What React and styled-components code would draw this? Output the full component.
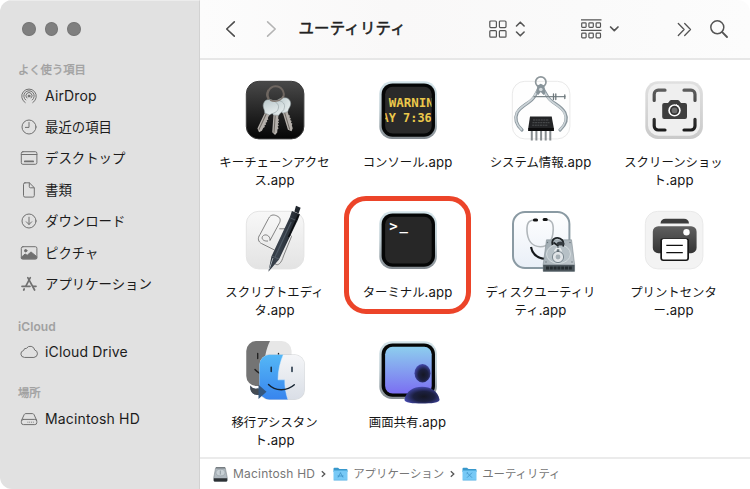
import React from 'react';
import styled, { createGlobalStyle } from 'styled-components';

const GlobalStyle = createGlobalStyle`
  * {
    box-sizing: border-box;
  }

  body {
    margin: 0;
    background: #fff;
    font-family: Inter, 'Noto Sans CJK JP', sans-serif;
    overflow: hidden;
  }

  p {
    margin: 0;
  }

  svg {
    display: block;
    flex-shrink: 0;
    overflow: visible;
  }
`

const Window = styled.div`
  display: flex;
  width: 750px;
  height: 489px;
  overflow: hidden;
  border-radius: 12px;
  background: #fff;
`

const Sidebar = styled.div`
  width: 200px;
  flex-shrink: 0;
  padding: 22px 0 0 18px;
  background: #e1e1e1;
  border-top: 1px solid #ececec;
  border-right: 1px solid #d2d2d2;
`

const Lights = styled.div`
  display: flex;
  gap: 9px;
  padding-left: 4px;
  margin-top: -1px;
  margin-bottom: 25px;
`

const Light = styled.span`
  width: 13.5px;
  height: 14px;
  border-radius: 50%;
  background: #7f7f7f;
  border: 1px solid #757575;
`

const Section = styled.div`
  margin-bottom: ${({ gap }) => gap || 0}px;
`

const SectionTitle = styled.p`
  height: 18px;
  margin-bottom: 1px;
  line-height: 18px;
  font-size: ${({ latin }) => latin ? '12px' : '11.3px'};
  font-weight: ${({ latin }) => latin ? 600 : 400};
  letter-spacing: ${({ latin }) => latin ? '0.1px' : '0'};
  -webkit-text-stroke: ${({ latin }) => latin ? '0' : '0.35px #a0a0a0'};
  color: #a0a0a0;
`

const SideItem = styled.div`
  display: flex;
  align-items: center;
  gap: 7px;
  height: 31.4px;
  padding-left: 2px;
  color: #707070;

  & > p {
    font-size: ${({ latin }) => latin ? '14px' : '13.4px'};
    line-height: 20px;
    letter-spacing: ${({ latin }) => latin ? '0.15px' : '0'};
    color: #1c1c1c;
    white-space: nowrap;
  }
`

const Main = styled.div`
  flex: 1;
  min-width: 0;
  display: flex;
  flex-direction: column;
`

const Toolbar = styled.div`
  height: 60px;
  flex-shrink: 0;
  display: flex;
  align-items: center;
  padding: 0 22px 1px 25px;
  background: linear-gradient(90deg, #fcfcfc, #f9f8f8 35%, #fafafa 70%, #fcfcfc);
  border-bottom: 2px solid #e7e7e7;
  color: #555;
`

const Nav = styled.div`
  display: flex;
  gap: 31px;
`

const Title = styled.p`
  margin-left: 22.5px;
  padding-top: 1px;
  font-size: 15.4px;
  line-height: 22px;
  letter-spacing: 0.2px;
  color: #222;
  -webkit-text-stroke: 0.5px #222;
  white-space: nowrap;
`

const Tools = styled.div`
  margin-left: auto;
  display: flex;
  align-items: center;
`

const Tool = styled.div`
  display: flex;
  align-items: center;
  gap: ${({ gap }) => gap || 0}px;
  margin-right: ${({ after }) => after || 0}px;
`

const Files = styled.div`
  flex: 1;
  min-height: 0;
  display: grid;
  grid-template-columns: repeat(4, 133px);
  grid-auto-rows: 130px;
  padding: 14px 0 0 8px;
`

const File = styled.div`
  position: relative;
  display: flex;
  flex-direction: column;
  align-items: center;
`

const FileName = styled.p`
  margin-top: 12px;
  font-size: 12.4px;
  line-height: 18px;
  color: #161616;
  text-align: center;
  white-space: nowrap;

  & > span {
    font-size: 13.2px;
    line-height: 0;
    letter-spacing: 0.1px;
  }
`

const Highlight = styled.div`
  position: absolute;
  top: -8px;
  left: 3px;
  width: 127px;
  height: 118px;
  border: 5px solid #ec4429;
  border-radius: 22px;
`

const PathBar = styled.div`
  height: 32px;
  flex-shrink: 0;
  display: flex;
  align-items: center;
  padding-left: 13px;
  border-top: 2px solid #ebebeb;
  color: #777;
`

const PathItem = styled.div`
  display: flex;
  align-items: center;
  gap: 5px;

  & > p {
    font-size: ${({ latin }) => latin ? '12px' : '11.4px'};
    line-height: 16px;
    letter-spacing: ${({ latin }) => latin ? '0.2px' : '0'};
    white-space: nowrap;
  }
`

const Separator = styled.div`
  padding: 0 7px 0 6px;
`

const SideIcon = ({ children }) => (
  <svg width="18" height="18" viewBox="0 0 18 18" fill="none" stroke="currentColor" strokeWidth="1" strokeLinecap="round" strokeLinejoin="round">
    {children}
  </svg>
)

const sideIcons = {
  airdrop: (
    <SideIcon>
      <path d="M5.2 15.6a7.3 7.3 0 1 1 7.6 0" />
      <path d="M5.7 13a5.2 5.2 0 1 1 6.6 0" />
      <path d="M6.9 11a3.1 3.1 0 1 1 4.2 0" />
      <circle cx="9" cy="9" r="1" fill="currentColor" />
    </SideIcon>
  ),
  recent: (
    <SideIcon>
      <circle cx="9" cy="9" r="7" />
      <path d="M9 4.5V9.4H5.4" />
    </SideIcon>
  ),
  desktop: (
    <SideIcon>
      <rect x="1.3" y="2.7" width="15.6" height="12.6" rx="1.6" />
      <path d="M1.3 5.5H16.9" />
      <path d="M4.8 12.4H13.2" strokeWidth="1.7" />
    </SideIcon>
  ),
  documents: (
    <SideIcon>
      <path d="M5 1.8H9.4L14.3 6.7V14.6a1.5 1.5 0 0 1-1.5 1.5H5a1.5 1.5 0 0 1-1.5-1.5V3.3A1.5 1.5 0 0 1 5 1.8Z" />
      <path d="M9.3 2V5.7a1.1 1.1 0 0 0 1.1 1.1H14" />
    </SideIcon>
  ),
  downloads: (
    <SideIcon>
      <circle cx="9" cy="9" r="7" />
      <path d="M9 5.2V12.4M6.3 9.8 9 12.5 11.7 9.8" />
    </SideIcon>
  ),
  pictures: (
    <SideIcon>
      <rect x="1.3" y="2.7" width="15.6" height="12.4" rx="1.6" />
      <circle cx="5.7" cy="6.7" r="1.2" fill="currentColor" />
      <path d="M1.6 13 5.1 10 7.2 11.3 11 7.9 16.7 12.6V14.6H1.8Z" fill="currentColor" />
    </SideIcon>
  ),
  applications: (
    <SideIcon>
      <path d="M10.3 2.7 6 10.9M7.8 2.7 14.6 15" strokeWidth="1.7" />
      <path d="M2 11.3H10M13 11.3H16" strokeWidth="1.7" />
      <path d="M4.2 14 3.7 15" strokeWidth="1.7" />
    </SideIcon>
  ),
  cloud: (
    <SideIcon>
      <path d="M4.1 14.4a3.5 3.5 0 0 1-.5-6.9A2.6 2.6 0 0 1 6.5 5.3 4.5 4.5 0 0 1 14.7 7a3.8 3.8 0 0 1-.4 7.4Z" />
    </SideIcon>
  ),
  disk: (
    <SideIcon>
      <path d="M1.6 10.2 4.2 4.6Q4.7 3.6 5.8 3.6H12.4Q13.5 3.6 14 4.6L16.6 10.2" />
      <rect x="1.4" y="9.4" width="15.4" height="5.2" rx="2" />
      <path d="M7.5 12.2H14.3" strokeDasharray="0.8 1" strokeLinecap="butt" />
    </SideIcon>
  ),
}

const Tile = ({ fill, stroke }) => (
  <rect x="9.3" y="7.3" width="57.6" height="57.6" rx="12.5" fill={fill} stroke={stroke || 'none'} />
)

const Monitor = ({ id, screen, children }) => (
  <>
    <defs>
      <linearGradient id={`${id}-rim`} x1="0" y1="0" x2="0" y2="1">
        <stop offset="0" stopColor="#d3e4ea" />
        <stop offset=".5" stopColor="#bccbd1" />
        <stop offset="1" stopColor="#858c92" />
      </linearGradient>
    </defs>
    <Tile fill={`url(#${id}-rim)`} />
    <rect x="11.6" y="9.4" width="53.4" height="53.3" rx="11" fill="#050606" />
    <rect x="15.1" y="12.7" width="46.6" height="46.8" rx="7.5" fill={screen} />
    {children}
  </>
)

const AppIcon = ({ children }) => (
  <svg width="76" height="68" viewBox="0 0 76 68">{children}</svg>
)

const KeyShape = ({ x, y, angle, fill }) => (
  <g transform={`translate(${x} ${y}) rotate(${angle})`}>
    <path d="M-2.7 5H2.3V10l1.1 1.2-1.1 1.3 1.1 1.4-1.1 1.4 1.1 1.4-1.1 1.4 1.1 1.4-1.1 1.4V24L.3 26.5-2.7 24Z" fill="#b5b0ab" />
    <path d="M-.9 7V24.4" stroke="#6d6862" strokeWidth="1" />
    <path d="M-7.8-2C-7.8-6.6-4-8 0-8S7.8-6.6 7.8-2C7.8 2.4 4 3.4 2.6 6.6H-2.8C-4 3.4-7.8 2.4-7.8-2Z" fill={fill} stroke="#8c989b" strokeWidth=".5" />
  </g>
)

const appIcons = {
  keychain: (
    <AppIcon>
      <defs>
        <linearGradient id="kc" x1="0" y1="0" x2="0" y2="1">
          <stop offset="0" stopColor="#494949" />
          <stop offset="1" stopColor="#050505" />
        </linearGradient>
        <linearGradient id="kc-key" x1="0" y1="0" x2="1" y2="1">
          <stop offset="0" stopColor="#b6c4c7" />
          <stop offset="1" stopColor="#eef4f4" />
        </linearGradient>
      </defs>
      <Tile fill="url(#kc)" stroke="#3c3c3c" />
      <path d="M32 25A8 8.3 0 1 1 46 24" fill="none" stroke="#6e6660" strokeWidth="2" />
      <KeyShape x={46.5} y={32} angle={-17} fill="url(#kc-key)" />
      <KeyShape x={39.6} y={34.5} angle={4} fill="url(#kc-key)" />
      <KeyShape x={33} y={34} angle={25} fill="url(#kc-key)" />
      <path d="M31.7 25.5A8 8.3 0 0 1 31.5 16" fill="none" stroke="#6f6761" strokeWidth="1.8" />
      <path d="M33 26C38 28.5 44 27 46.5 22" fill="none" stroke="#807871" strokeWidth="1.5" />
    </AppIcon>
  ),
  console: (
    <AppIcon>
      <Monitor id="con" screen="#2a2a2a">
        <clipPath id="con-clip"><rect x="15.3" y="12.7" width="46.2" height="46.8" rx="7" /></clipPath>
        <g clipPath="url(#con-clip)" fill="#ecc84b" fontFamily="'DejaVu Sans Mono', monospace" fontWeight="700" fontSize="12">
          <text x="18.8" y="32.9" textLength="45" lengthAdjust="spacingAndGlyphs">WARNIN</text>
          <text x="11.6" y="48.2" textLength="50.2" lengthAdjust="spacingAndGlyphs">AY 7:36</text>
        </g>
      </Monitor>
    </AppIcon>
  ),
  sysinfo: (
    <AppIcon>
      <Tile fill="#fefefe" stroke="#e9e9e9" />
      <g fill="none" strokeLinecap="round">
        <circle cx="37.8" cy="8" r="5.2" stroke="#8f989c" strokeWidth="1.7" />
        <path d="M36 14.5 31.5 22.5C28 29 18.5 31 14.2 38.5 11.5 44.5 13.5 51 19 56" stroke="#8b979e" strokeWidth="3.2" />
        <path d="M39.8 14.5 44.5 22.5C48 29 57.5 31 61.8 38.5 64.8 44.5 62.5 51 57 56" stroke="#8b979e" strokeWidth="3.2" />
        <path d="M35.5 15 31 22.5C27.5 29 18 31 13.8 38.5 11.2 44.5 13.5 51 18.5 55.5" stroke="#cbd3d7" strokeWidth="1.7" />
        <path d="M39.8 15 44.2 22.5C47.5 29 57 31 61.2 38.5 64.2 44.5 62 51 57 55.5" stroke="#cbd3d7" strokeWidth="1.7" />
        <path d="M31 22.7H62" stroke="#7c868a" strokeWidth="1.3" />
        <path d="M50.5 20V25.5M52.8 20V25.5M61.8 21V24.5" stroke="#6c767a" strokeWidth="1.3" />
      </g>
      <path d="M34.5 11.5 37.8 9.8 41.2 11.5 42.5 19 40.5 21 37.8 18 35.2 21 33 19Z" fill="#88949a" />
      <circle cx="37.8" cy="15.5" r="1.8" fill="#d4dadd" />
      <path d="M28.8 57V66.5M33.4 57V66.5M38.1 57V66.5M42.7 57V66.5M47.3 57V66.5" stroke="#888d90" strokeWidth="2" />
      <path d="M27 42.5H48.7L50.8 54V57H25.3V54Z" fill="#232426" />
      <path d="M25.3 54H50.8V57H25.3Z" fill="#0c0c0d" />
      <path d="M30 46H46M29.5 48.7H46.5M29.2 51.2H45" stroke="#5b5d60" strokeWidth=".8" strokeDasharray="2 .6" />
    </AppIcon>
  ),
  screenshot: (
    <AppIcon>
      <defs>
        <linearGradient id="ss" x1="0" y1="0" x2="0" y2="1">
          <stop offset="0" stopColor="#e0e0e0" />
          <stop offset="1" stopColor="#cacaca" />
        </linearGradient>
        <linearGradient id="ss-dark" x1="0" y1="14" x2="0" y2="57" gradientUnits="userSpaceOnUse">
          <stop offset="0" stopColor="#606060" />
          <stop offset="1" stopColor="#1b1b1b" />
        </linearGradient>
      </defs>
      <Tile fill="url(#ss)" />
      <rect x="12" y="9.7" width="52" height="52" rx="10.5" fill="#efefef" />
      <path d="M29 16.2H22.2A4 4 0 0 0 18.2 20.2V26.5M48 16.2H55A4 4 0 0 1 59 20.2V26.5M29 56H22.2A4 4 0 0 1 18.2 52V45.3M48 56H55A4 4 0 0 0 59 52V45.3" fill="none" stroke="url(#ss-dark)" strokeWidth="3.2" strokeLinecap="round" />
      <path d="M28.2 29H32L34 26.5Q34.5 26 35.2 26H41.8Q42.5 26 43 26.5L45 29H49A2 2 0 0 1 51 31V43A2 2 0 0 1 49 45H28.2A2 2 0 0 1 26.2 43V31A2 2 0 0 1 28.2 29Z" fill="#3e3e3e" />
      <circle cx="38.5" cy="36.4" r="6.2" fill="#fff" />
      <circle cx="38.5" cy="36.4" r="4.6" fill="#333" />
      <circle cx="38.5" cy="36.4" r="2.9" fill="#6f6f6f" />
      <path d="M40 30.5 42.7 32.2" stroke="#fff" strokeWidth="1" />
    </AppIcon>
  ),
  script: (
    <AppIcon>
      <defs>
        <linearGradient id="sc" x1="0" y1="0" x2="0" y2="1">
          <stop offset="0" stopColor="#f8f8f8" />
          <stop offset="1" stopColor="#e3e3e3" />
        </linearGradient>
        <linearGradient id="sc-pen" x1="0" y1="0" x2="1" y2=".4">
          <stop offset="0" stopColor="#171b21" />
          <stop offset=".5" stopColor="#3a434e" />
          <stop offset="1" stopColor="#11151a" />
        </linearGradient>
      </defs>
      <Tile fill="url(#sc)" stroke="#e4e4e4" />
      <path d="M23 30.5 31.5 14.5C34 9.5 38 10.8 41 12.5 43.8 14.2 43.5 17 42.3 19.2L33 36.5C33.5 31.5 28 29 25.5 32.5 24 35.5 27.5 37.5 31 37M23 30.5C20 34.5 21.5 38 24.5 39.5L37.5 46M42.3 24.8H48L54.5 32.5 46.5 52C44.5 59 41 62.5 38 59.8 36.5 57 38 54.5 39.5 52" fill="none" stroke="#666" strokeWidth=".8" />
      <path d="M31.4 67.8 34.4 52.5 52.9 13 54.9 7 63 10.2 60.8 16 42 55.5Z" fill="url(#sc-pen)" />
      <path d="M57.4 7.5 59 1.8 63.6 3.7 61.6 9.4Z" fill="#20262d" />
      <path d="M53.5 14 60.3 17M34.8 52 42 55" stroke="#66717b" strokeWidth=".6" />
      <path d="M54.2 18 38 53" stroke="#505b66" strokeWidth="1.1" />
      <path d="M61.5 11 51.5 33" stroke="#090b0e" strokeWidth="1.4" />
      <path d="M36 54 32.2 65.5" stroke="#a5adb3" strokeWidth="1" />
    </AppIcon>
  ),
  terminal: (
    <AppIcon>
      <Monitor id="term" screen="#272727">
        <text x="19.3" y="27.4" fill="#fff" fontFamily="'DejaVu Sans Mono', monospace" fontWeight="700" fontSize="14">
          &gt;<tspan x="29.5" dy="-1.7">_</tspan>
        </text>
      </Monitor>
    </AppIcon>
  ),
  diskutil: (
    <AppIcon>
      <defs>
        <linearGradient id="du" x1="0" y1="0" x2="0" y2="1">
          <stop offset="0" stopColor="#ffffff" />
          <stop offset="1" stopColor="#e9eff7" />
        </linearGradient>
        <linearGradient id="du-disk" x1="0" y1="0" x2="1" y2="1">
          <stop offset="0" stopColor="#9da9b0" />
          <stop offset="1" stopColor="#c3cacf" />
        </linearGradient>
      </defs>
      <rect x="10" y="8" width="56.4" height="56" rx="12" fill="url(#du)" stroke="#8a9aa3" strokeWidth="2" />
      <path d="M32.5 16C26 15.5 23.5 19 24 27 24.4 35 28 42.5 37.3 42.7 47 42.7 49.8 35 50.2 26 50.5 19 48.5 15.5 42.5 15.5" fill="none" stroke="#b0b6ba" strokeWidth="1.6" />
      <path d="M31.5 16H33.5M41.2 15.5H43.2" stroke="#111" strokeWidth="3.2" strokeLinecap="round" />
      <path d="M28 43C29.5 51 34 54.5 43 55" fill="none" stroke="#15191c" strokeWidth="2.2" />
      <path d="M43.5 35.8H68.5L71.6 60.5V67.3H40.2V60.5Z" fill="url(#du-disk)" stroke="#828d94" strokeWidth=".6" />
      <path d="M40.2 60.8H71.6V67.5H40.2Z" fill="#4b555b" />
      <path d="M43 64H69" stroke="#242b2f" strokeWidth="3" strokeDasharray="3 .8" />
      <ellipse cx="55.5" cy="50" rx="12" ry="9.5" fill="#b6c0c6" stroke="#dce2e5" strokeWidth=".8" />
      <circle cx="55" cy="53" r="5.6" fill="#e1e5e8" stroke="#7a878f" />
      <circle cx="55" cy="53" r="2.4" fill="#a5afb5" />
      <path d="M49.5 41C48 35 53 32.8 57 34.5 60 36 61.2 39 60 42.5M50.5 38.5 55.5 42" fill="none" stroke="#1e2326" strokeWidth="1.8" />
      <ellipse cx="57.5" cy="39.5" rx="3.6" ry="2" fill="#343b40" />
      <path d="M55 42.5V48" stroke="#566168" strokeWidth="1.6" />
      <path d="M51.5 47.5 53.5 44.5H57L58.5 47.5" fill="none" stroke="#e8ecee" strokeWidth="1.4" />
      <circle cx="44.5" cy="38.5" r=".7" fill="#69757b" />
      <circle cx="67" cy="38.5" r=".7" fill="#69757b" />
      <circle cx="43" cy="58" r=".7" fill="#69757b" />
      <circle cx="69" cy="58" r=".7" fill="#69757b" />
    </AppIcon>
  ),
  printer: (
    <AppIcon>
      <defs>
        <linearGradient id="pr" x1="0" y1="0" x2="0" y2="1">
          <stop offset="0" stopColor="#606060" />
          <stop offset="1" stopColor="#343434" />
        </linearGradient>
      </defs>
      <Tile fill="#f3f3f3" stroke="#e9e9e9" />
      <path d="M24.5 19.4Q25 14.8 29.5 14.8H48Q52.5 14.8 53 19.4Z" fill="#3d3d3d" />
      <rect x="16.8" y="22.2" width="43.8" height="27" rx="5.5" fill="url(#pr)" />
      <path d="M24.3 36.5A2 2 0 0 1 26.3 34.5H51A2 2 0 0 1 53 36.5V54A3 3 0 0 1 50 57H27.3A3 3 0 0 1 24.3 54Z" fill="#171717" />
      <rect x="26" y="35" width="25.3" height="20.5" rx="1.5" fill="#fff" />
      <path d="M30.3 41.4H46.8M30.3 48.6H46.8" stroke="#111" strokeWidth="1.2" />
      <circle cx="50.5" cy="28.2" r="3.2" fill="#fff" />
    </AppIcon>
  ),
  migration: (
    <AppIcon>
      <defs>
        <linearGradient id="mg-blue" x1="0" y1="0" x2="0" y2="1">
          <stop offset="0" stopColor="#55b8f6" />
          <stop offset="1" stopColor="#3784ee" />
        </linearGradient>
        <linearGradient id="mg-white" x1="0" y1="0" x2="0" y2="1">
          <stop offset="0" stopColor="#f5f6f8" />
          <stop offset="1" stopColor="#d9dee6" />
        </linearGradient>
        <clipPath id="mg-back"><rect x="9.3" y="7" width="45.3" height="45" rx="10" /></clipPath>
        <clipPath id="mg-front"><rect x="22.5" y="20.7" width="45" height="44.8" rx="10" /></clipPath>
      </defs>
      <g clipPath="url(#mg-back)">
        <path d="M9 7H55V53H9Z" fill="#e7e7e7" />
        <path d="M9 7H33C29 15 27.5 24 27.5 31.5H35V53H9Z" fill="#747474" />
        <path d="M20.7 19.5V24.5M41.5 19.5V24.5M18 35.5C21 39 25 41 30 42" stroke="#222" strokeWidth="1.4" fill="none" strokeLinecap="round" />
      </g>
      <rect x="22" y="20.3" width="46" height="45.7" rx="10.5" fill="#8a8f96" opacity=".35" />
      <g clipPath="url(#mg-front)">
        <path d="M22 20H68V66H22Z" fill="url(#mg-white)" />
        <path d="M22 20H46.5C43 28 41 37 41 45.8H47.8C47.5 53 49 60 51 66H22Z" fill="url(#mg-blue)" />
        <path d="M46.5 20C43 28 41 37 41 45.8H47.8C47.5 53 49 60 51 66" fill="none" stroke="#d3edff" strokeWidth=".5" />
        <path d="M34.2 33.2V37.5M55 33.2V37.5" stroke="#182b3d" strokeWidth="1.5" strokeLinecap="round" />
        <path d="M31.5 50.5C38 57.3 50 57.5 57.3 50.8" fill="none" stroke="#14222f" strokeWidth="1.4" strokeLinecap="round" />
      </g>
      <path d="M13.5 51.5C15 54.5 18 55 21.5 54.5V50.8L29.5 57.8 21.5 65V61C16 61 12.5 57.5 13.5 51.5Z" fill="#34577f" />
      <path d="M13.5 51.5C15 54.5 18 55 21.5 54.5V61C16 61 12.5 57.5 13.5 51.5Z" fill="#454b52" />
    </AppIcon>
  ),
  screenshare: (
    <AppIcon>
      <defs>
        <linearGradient id="sh" x1="0" y1="0" x2="0" y2="1">
          <stop offset="0" stopColor="#8dceee" />
          <stop offset="1" stopColor="#7b6ff2" />
        </linearGradient>
        <radialGradient id="sh-person" cx=".55" cy=".58" r=".6">
          <stop offset="0" stopColor="#151724" />
          <stop offset=".5" stopColor="#1c2041" />
          <stop offset="1" stopColor="#464bb2" />
        </radialGradient>
      </defs>
      <Monitor id="shm" screen="url(#sh)">
        <ellipse cx="52.5" cy="39.3" rx="8" ry="9.2" fill="url(#sh-person)" />
        <path d="M34.5 65.5C36 57 43.5 52.8 52 52.8S68 57 69.5 65.5C70 69 61 69.5 52 69.5S34 69 34.5 65.5Z" fill="url(#sh-person)" />
      </Monitor>
    </AppIcon>
  ),
}

const DriveIcon = () => (
  <svg width="15" height="15" viewBox="0 0 15 15">
    <path d="M2.6 .8H12.3L14.2 10.3V13.6Q14.2 14.4 13.4 14.4H1.6Q.8 14.4 .8 13.6V10.3Z" fill="#b0b9c0" stroke="#7e878c" strokeWidth=".6" />
    <path d="M3 .8H12" stroke="#4e565b" strokeWidth=".9" />
    <ellipse cx="7.5" cy="5.6" rx="4.5" ry="3.3" fill="#c8d0d5" stroke="#8f999f" strokeWidth=".5" />
    <path d="M7.3 3.5V7.5" stroke="#8f999f" />
    <path d="M.8 11.3H14.2V13.6Q14.2 14.4 13.4 14.4H1.6Q.8 14.4 .8 13.6Z" fill="#2c3135" />
  </svg>
)

const FolderIcon = ({ mark }) => (
  <svg width="15" height="14" viewBox="0 0 15 14">
    <path d="M.5 1.8Q.5.8 1.5.8H5L6.5 2H13.5Q14.5 2 14.5 3V5H.5Z" fill="#3898cc" />
    <path d="M.5 3.5H14.5V12.4Q14.5 13.3 13.6 13.3H1.4Q.5 13.3 .5 12.4Z" fill="#77c9f6" />
    <path d="M.7 13.2H14.3" stroke="#5aafdf" strokeWidth=".6" />
    <path d={mark} stroke="#3d92c6" strokeWidth=".8" fill="none" />
  </svg>
)

const favorites = [
  { icon: 'airdrop', title: 'AirDrop', latin: true },
  { icon: 'recent', title: '最近の項目' },
  { icon: 'desktop', title: 'デスクトップ' },
  { icon: 'documents', title: '書類' },
  { icon: 'downloads', title: 'ダウンロード' },
  { icon: 'pictures', title: 'ピクチャ' },
  { icon: 'applications', title: 'アプリケーション' },
]

const files = [
  { icon: 'keychain', lines: ['キーチェーンアクセ', 'ス'] },
  { icon: 'console', lines: ['コンソール'] },
  { icon: 'sysinfo', lines: ['システム情報'] },
  { icon: 'screenshot', lines: ['スクリーンショッ', 'ト'] },
  { icon: 'script', lines: ['スクリプトエディ', 'タ'] },
  { icon: 'terminal', lines: ['ターミナル'], selected: true },
  { icon: 'diskutil', lines: ['ディスクユーティリ', 'ティ'] },
  { icon: 'printer', lines: ['プリントセンタ', 'ー'] },
  { icon: 'migration', lines: ['移行アシスタン', 'ト'] },
  { icon: 'screenshare', lines: ['画面共有'] },
]

const SideRow = ({ icon, title, latin }) => (
  <SideItem latin={latin ? 1 : undefined}>
    {sideIcons[icon]}
    <p>{title}</p>
  </SideItem>
)

const PathArrow = () => (
  <Separator>
    <svg width="5" height="8" viewBox="0 0 5 8" fill="none" stroke="#555" strokeWidth="1.3">
      <path d="M.8 1.2 3.8 4 .8 6.8" />
    </svg>
  </Separator>
)

export default () => {
  return (
    <>
      <GlobalStyle />
      <Window>
        <Sidebar>
          <Lights>
            <Light />
            <Light />
            <Light />
          </Lights>
          <Section gap={18}>
            <SectionTitle>よく使う項目</SectionTitle>
            {favorites.map((item, index) => <SideRow key={index} {...item} />)}
          </Section>
          <Section gap={16}>
            <SectionTitle latin={1}>iCloud</SectionTitle>
            <SideRow icon="cloud" title="iCloud Drive" latin />
          </Section>
          <Section>
            <SectionTitle>場所</SectionTitle>
            <SideRow icon="disk" title="Macintosh HD" latin />
          </Section>
        </Sidebar>
        <Main>
          <Toolbar>
            <Nav>
              <svg width="10" height="16" viewBox="0 0 10 16" fill="none" stroke="#4d4d4d" strokeWidth="1.6" strokeLinecap="round" strokeLinejoin="round">
                <path d="M9.3 .9 1.7 8 9.3 15.1" />
              </svg>
              <svg width="10" height="16" viewBox="0 0 10 16" fill="none" stroke="#b4b4b4" strokeWidth="1.6" strokeLinecap="round" strokeLinejoin="round">
                <path d="M1.6 .9 9.2 8 1.6 15.1" />
              </svg>
            </Nav>
            <Title>ユーティリティ</Title>
            <Tools>
              <Tool gap={9} after={55}>
                <svg width="18" height="18" viewBox="0 0 18 18" fill="none" stroke="currentColor" strokeWidth="1.2">
                  <rect x=".8" y="1" width="6.6" height="6.6" rx="1" />
                  <rect x="10.4" y="1" width="6.6" height="6.6" rx="1" />
                  <rect x=".8" y="10.6" width="6.6" height="6.6" rx="1" />
                  <rect x="10.4" y="10.6" width="6.6" height="6.6" rx="1" />
                </svg>
                <svg width="10" height="16" viewBox="0 0 10 16" fill="none" stroke="currentColor" strokeWidth="1.6" strokeLinecap="round" strokeLinejoin="round">
                  <path d="M.5 5 4.3 1.2 8.1 5M.5 11 4.3 14.8 8.1 11" />
                </svg>
              </Tool>
              <Tool gap={8} after={58}>
                <svg width="21" height="20" viewBox="0 0 21 20" fill="none" stroke="currentColor" strokeWidth="1.2">
                  <path d="M0 .8H20.5M0 11.3H20.5" />
                  <rect x=".7" y="3.8" width="4.4" height="4.6" rx=".8" />
                  <rect x="7.9" y="3.8" width="4.4" height="4.6" rx=".8" />
                  <rect x="15.1" y="3.8" width="4.4" height="4.6" rx=".8" />
                  <rect x=".7" y="14.2" width="4.4" height="4.6" rx=".8" />
                  <rect x="7.9" y="14.2" width="4.4" height="4.6" rx=".8" />
                  <rect x="15.1" y="14.2" width="4.4" height="4.6" rx=".8" />
                </svg>
                <svg width="10" height="6" viewBox="0 0 10 6" fill="none" stroke="currentColor" strokeWidth="1.7" strokeLinecap="round" strokeLinejoin="round">
                  <path d="M.6 1 4.3 4.7 8 1" />
                </svg>
              </Tool>
              <Tool after={18}>
                <svg width="14" height="14" viewBox="0 0 14 14" fill="none" stroke="currentColor" strokeWidth="1.3" strokeLinecap="round" strokeLinejoin="round">
                  <path d="M.3 1.5 6.1 7.5 .3 13.5M6.7 1.5 12.5 7.5 6.7 13.5" />
                </svg>
              </Tool>
              <Tool>
                <svg width="18" height="18" viewBox="0 0 18 18" fill="none" stroke="currentColor" strokeLinecap="round">
                  <circle cx="7.3" cy="7.3" r="6.5" strokeWidth="1.5" />
                  <path d="M12.2 12.2 17 17" strokeWidth="1.9" />
                </svg>
              </Tool>
            </Tools>
          </Toolbar>
          <Files>
            {files.map((file, index) => (
              <File key={index}>
                {appIcons[file.icon]}
                <FileName>
                  {file.lines.length > 1 && <>{file.lines[0]}<br /></>}
                  {file.lines[file.lines.length - 1]}<span>.app</span>
                </FileName>
                {file.selected && <Highlight />}
              </File>
            ))}
          </Files>
          <PathBar>
            <PathItem latin={1}>
              <DriveIcon />
              <p>Macintosh HD</p>
            </PathItem>
            <PathArrow />
            <PathItem>
              <FolderIcon mark="M7.7 5.5 5 10.5M7.3 5.5 10 10.5M4.5 9H10.5" />
              <p>アプリケーション</p>
            </PathItem>
            <PathArrow />
            <PathItem>
              <FolderIcon mark="M5 5.7 10 10.7M10 5.7 5 10.7M4.6 6.7 6 5.3" />
              <p>ユーティリティ</p>
            </PathItem>
          </PathBar>
        </Main>
      </Window>
    </>
  )
}
